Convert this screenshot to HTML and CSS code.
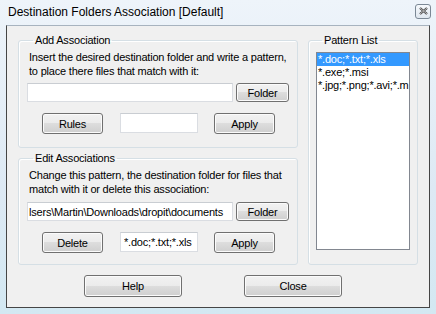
FILE: index.html
```html
<!DOCTYPE html>
<html lang="en">
<head>
    <meta charset="UTF-8">
    <title>Destination Folders Association</title>
    <link rel="stylesheet" href="styles.css">
</head>
<body>
    <div class="window">
        <div class="titlebar">
            <span class="title">Destination Folders Association [Default]</span>
            <button class="close-btn" type="button">
                <svg width="9" height="8" viewBox="0 0 9 8">
                    <path d="M1 1 L8 7 M8 1 L1 7" stroke="#3a3a3a" stroke-width="2.2" fill="none"/>
                    <path d="M1 1 L8 7 M8 1 L1 7" stroke="#f4f4f4" stroke-width="0.7" fill="none"/>
                </svg>
            </button>
        </div>
        <div class="client">
            <div class="main">
                <div class="left-col">
                    <fieldset class="group group-add">
                        <legend>Add Association</legend>
                        <p class="hint">Insert the desired destination folder and write a pattern,<br>to place there files that match with it:</p>
                        <div class="path-row">
                            <input class="field path-field" type="text" value="">
                            <button class="btn btn-folder" type="button">Folder</button>
                        </div>
                        <div class="action-row">
                            <button class="btn btn-action" type="button">Rules</button>
                            <input class="field pattern-field" type="text" value="">
                            <button class="btn btn-action" type="button">Apply</button>
                        </div>
                    </fieldset>
                    <fieldset class="group group-edit">
                        <legend>Edit Associations</legend>
                        <p class="hint">Change this pattern, the destination folder for files that<br>match with it or delete this association:</p>
                        <div class="path-row">
                            <input class="field path-field" type="text" value="lsers\Martin\Downloads\dropit\documents">
                            <button class="btn btn-folder" type="button">Folder</button>
                        </div>
                        <div class="action-row">
                            <button class="btn btn-action" type="button">Delete</button>
                            <input class="field pattern-field" type="text" value="*.doc;*.txt;*.xls">
                            <button class="btn btn-action" type="button">Apply</button>
                        </div>
                    </fieldset>
                </div>
                <fieldset class="group group-list">
                    <legend>Pattern List</legend>
                    <ul class="listbox">
                        <li class="selected">*.doc;*.txt;*.xls</li>
                        <li>*.exe;*.msi</li>
                        <li>*.jpg;*.png;*.avi;*.m</li>
                    </ul>
                </fieldset>
            </div>
            <div class="footer">
                <button class="btn btn-wide" type="button">Help</button>
                <button class="btn btn-wide" type="button">Close</button>
            </div>
        </div>
    </div>
</body>
</html>
```

FILE: styles.css
```css
* {
    box-sizing: border-box;
}
body {
    margin: 0;
    font-family: "Liberation Sans", Arial, sans-serif;
    font-size: 11px;
    letter-spacing: -0.2px;
    color: #000;
    background: #dfeaf4;
}
.window {
    width: 436px;
    height: 314px;
    padding: 0 6px 6px 6px;
    background: linear-gradient(180deg, #eef4fa 0%, #dde9f4 60%, #d3e8f2 100%);
}
.titlebar {
    height: 25px;
    display: flex;
    align-items: center;
    justify-content: space-between;
    padding-left: 2px;
}
.title {
    font-size: 12px;
    letter-spacing: 0;
    margin-top: -1px;
}
.close-btn {
    width: 16px;
    height: 15px;
    margin-top: -3px;
    margin-right: -1px;
    padding: 0;
    display: flex;
    align-items: center;
    justify-content: center;
    border: 1px solid #7b8895;
    border-radius: 3px;
    background: linear-gradient(#f6f9fc, #dfe7ef);
}
.client {
    height: 283px;
    background: #f0f0f0;
    border: 1px solid #454545;
    border-top-color: #a7b3bf;
    padding: 7px 11px 10px 11px;
}
.main {
    display: flex;
    gap: 10px;
    height: 232px;
}
.left-col {
    width: 280px;
    display: flex;
    flex-direction: column;
    gap: 3px;
}
.group {
    margin: 0;
    border: 1px solid #d5dfe5;
    border-radius: 3px;
    box-shadow: inset 1px 1px 0 #fff;
}
.group legend {
    margin-left: 6px;
    padding: 0 2px;
    line-height: 14px;
}
.group-add {
    height: 115px;
    padding: 3px 8px 0 8px;
}
.group-edit {
    height: 114px;
    padding: 3px 8px 0 8px;
}
.group-list {
    width: 110px;
    padding: 5px 7px 0 7px;
}
.hint {
    margin: 0;
    padding-left: 2px;
    line-height: 14px;
}
.path-row {
    display: flex;
    gap: 3px;
    margin-top: 5px;
}
.group-edit .path-row {
    margin-top: 6px;
}
.action-row {
    display: flex;
    align-items: flex-start;
    margin-top: 11px;
    padding-left: 15px;
    gap: 17px;
}
.field {
    font: inherit;
    letter-spacing: inherit;
    color: #000;
    background: #fff;
    border: 1px solid #dadde2;
    border-top-color: #c9cdd2;
    padding: 0 1px;
    outline: none;
}
.path-field {
    width: 206px;
    height: 19px;
}
.pattern-field {
    width: 78px;
    height: 20px;
    padding-left: 3px;
}
.btn {
    font: inherit;
    letter-spacing: inherit;
    color: #000;
    border: 1px solid #707070;
    border-radius: 3px;
    background: linear-gradient(#f2f2f2 0%, #ebebeb 50%, #dddddd 50%, #cfcfcf 100%);
    box-shadow: inset 0 0 0 1px #fbfbfb;
    padding: 0;
}
.btn-folder {
    width: 53px;
    height: 19px;
}
.btn-action {
    width: 61px;
    height: 21px;
}
.action-row .btn-action:last-child {
    margin-left: -1px;
}
.btn-wide {
    width: 98px;
    height: 22px;
}
.listbox {
    list-style: none;
    margin: 0;
    padding: 0;
    width: 94px;
    height: 198px;
    background: #fff;
    border: 1px solid #828790;
    overflow: hidden;
}
.listbox li {
    line-height: 13px;
    padding-left: 1px;
    white-space: nowrap;
}
.listbox .selected {
    background: #3399ff;
    color: #fff;
}
.footer {
    display: flex;
    gap: 62px;
    padding-top: 10px;
    padding-left: 66px;
}
```
